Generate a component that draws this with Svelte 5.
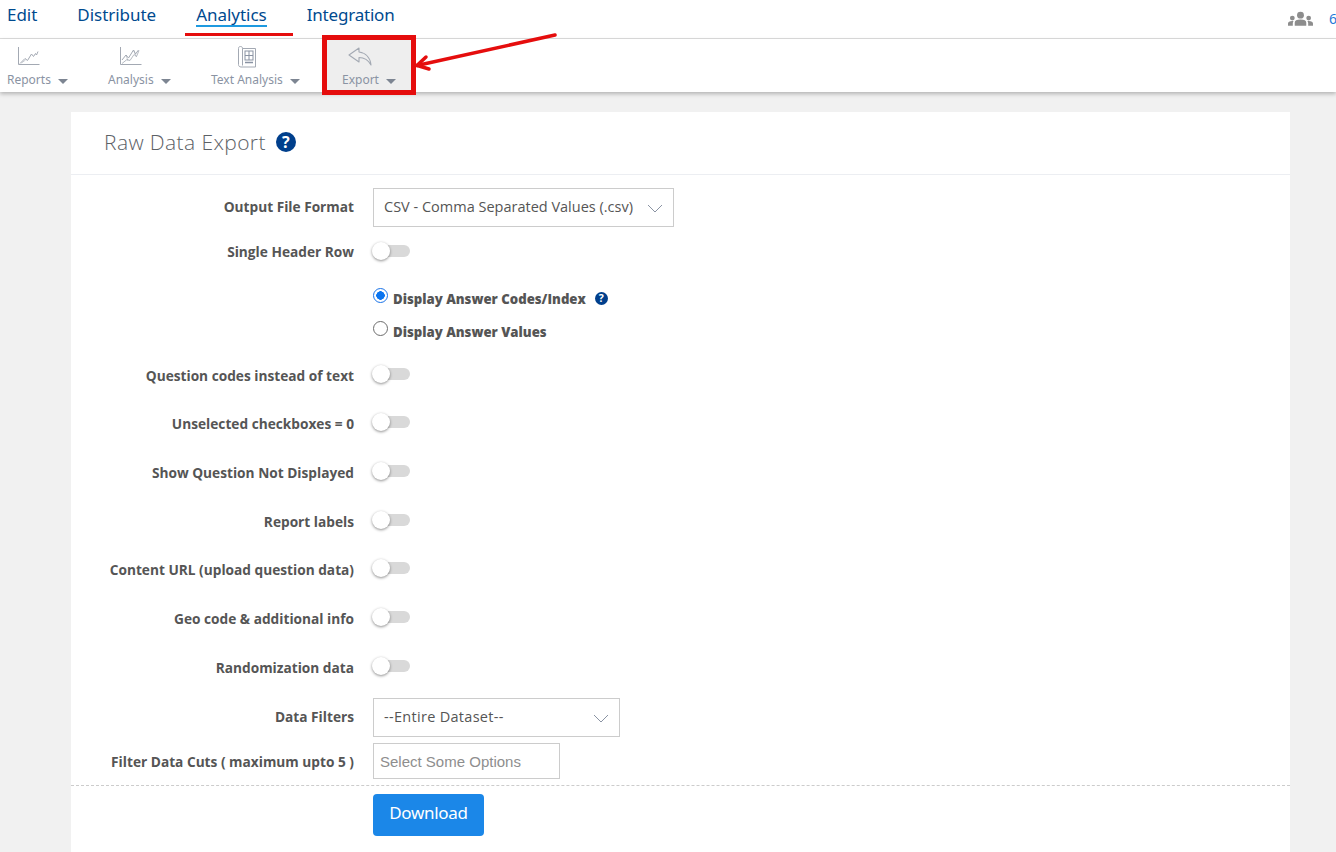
<script>
  const tabs = ['Edit', 'Distribute', 'Analytics', 'Integration'];
  const toggles = ['Question codes instead of text', 'Unselected checkboxes = 0', 'Show Question Not Displayed', 'Report labels', 'Content URL (upload question data)', 'Geo code & additional info', 'Randomization data'];
</script>

<div class="page">
  <header class="nav">
    <nav class="tabs">
      {#each tabs as t}
        <span class="tab" class:active={t === 'Analytics'}><span class="tab-text">{t}</span></span>
      {/each}
    </nav>
    <div class="users">
      <svg width="26" height="16" viewBox="0 0 26 16" fill="#8d8d8d"><circle cx="13" cy="4" r="3.600"/><circle cx="4.500" cy="7" r="2.500"/><circle cx="21.500" cy="7" r="2.500"/><path d="M7 15v-3.200C7 9.600 9 8.400 13 8.400s6 1.200 6 3.400V15zM0 15v-2.200C0 11 1.500 10 4.500 10c.7 0 1 .1 1.300.2-.5.700-.8 1.500-.8 2.300V15zM26 15v-2.200C26 11 24.500 10 21.500 10c-.7 0-1 .1-1.300.2.500.700.800 1.500.800 2.300V15z"/></svg>
      <span class="count">6</span>
    </div>
  </header>

  <div class="toolbar">
    <div class="tool reports">
      <div class="tool-inner">
        <svg width="23" height="24" viewBox="0 0 23 24" fill="none" stroke="#a3a9b3" stroke-width="1"><path d="M1.500 2v17.500H22.500"/><path d="M3 18.500l5-5 2.500 2 4-6.500 2 2.500 2-3 1 1.500 1.500-3.500"/><path d="M4.500 18l4-3" stroke-width=".6"/></svg>
        <span class="tool-label">Reports<i class="caret"></i></span>
      </div>
    </div>
    <div class="tool analysis">
      <div class="tool-inner">
        <svg width="23" height="24" viewBox="0 0 23 24" fill="none" stroke="#a3a9b3" stroke-width="1"><path d="M1.500 2v17.500H22.500"/><path d="M3 15l4-5 2.500 3 5-8 2 4 3-4"/><path d="M3 18.500l5-4 3 1 4-6 2.500 2 2.500-6" stroke-width=".8"/><path d="M7 10l2 6M14.500 5l3 7" stroke-width=".6"/></svg>
        <span class="tool-label">Analysis<i class="caret"></i></span>
      </div>
    </div>
    <div class="tool text">
      <div class="tool-inner">
        <svg width="20" height="24" viewBox="0 0 20 24" fill="none" stroke="#a3a9b3" stroke-width="1"><path d="M3.500 1.500c-1.500 0-2 .8-2 2v16c0 1.500 1 2.500 2.500 2.500h14.500V3.500H5.500"/><path d="M3.500 1.500c1.500 0 2 .8 2 2v17"/><rect x="8" y="6" width="8" height="9" stroke="#8a93a3"/><path d="M12 6v9M8 10.500h8" stroke="#8a93a3"/><path d="M8 17.500h8" stroke="#8a93a3" stroke-width="1.500"/></svg>
        <span class="tool-label">Text Analysis<i class="caret"></i></span>
      </div>
    </div>
    <div class="tool export">
      <div class="tool-inner">
        <svg width="24" height="24" viewBox="0 0 24 24" fill="none" stroke="#a3a9b3" stroke-width="1.100" stroke-linejoin="round"><path d="M11 3 1 10l10 7v-4.500c5 0 9 2 12 7.500-.5-7-5-12-12-13z"/></svg>
        <span class="tool-label">Export<i class="caret"></i></span>
      </div>
    </div>
  </div>

  <main class="card">
    <div class="card-head">
      <h1>Raw Data Export</h1>
      <span class="help">?</span>
    </div>

    <form class="form" onsubmit={(e) => e.preventDefault()}>
      <div class="row r-format">
        <span class="lbl up">Output File Format</span>
        <div class="select format">CSV - Comma Separated Values (.csv)
          <svg class="chev" width="16" height="9" viewBox="0 0 16 9" fill="none" stroke="#8a93a3"><path d="M1 1l7 7 7-7"/></svg>
        </div>
      </div>
      <div class="row r-header">
        <span class="lbl">Single Header Row</span>
        <span class="switch"></span>
      </div>
      <div class="radios">
        <div class="radio-row">
          <span class="radio on"></span>
          <b>Display Answer Codes/Index</b>
          <span class="help-sm">?</span>
        </div>
        <div class="radio-row second">
          <span class="radio"></span>
          <b>Display Answer Values</b>
        </div>
      </div>
      <div class="toggles">
        {#each toggles as t}
          <div class="row tg">
            <span class="lbl nudge">{t}</span>
            <span class="switch"></span>
          </div>
        {/each}
      </div>
      <div class="row r-filter">
        <span class="lbl up">Data Filters</span>
        <div class="select filter">--Entire Dataset--
          <svg class="chev" width="16" height="9" viewBox="0 0 16 9" fill="none" stroke="#8a93a3"><path d="M1 1l7 7 7-7"/></svg>
        </div>
      </div>
      <div class="row r-cuts">
        <span class="lbl nudge">Filter Data Cuts ( maximum upto 5 )</span>
        <div class="multi">Select Some Options</div>
      </div>
      <div class="actions">
        <button type="submit">Download</button>
      </div>
    </form>
  </main>

  <div class="red-bar"></div>
  <div class="red-box"></div>
  <svg class="arrow" width="150" height="40" viewBox="0 0 150 40" fill="none" stroke="#e50d0d" stroke-width="3.500" stroke-linecap="round"><path d="M146 2 8 32.500"/><path d="M17 24 8 32.500l12 3.500"/></svg>
</div>

<style>
  :global(body) { margin: 0; background: #f1f1f1; overflow: hidden; }
  .page { position: relative; height: 852px; overflow: hidden; background: #f1f1f1; font-family: "Noto Sans", sans-serif; color: #555; }
  .nav { display: flex; justify-content: space-between; height: 38px; background: #fff; border-bottom: 1px solid #ddd; }
  .tabs { display: flex; gap: 40px; padding-left: 7px; }
  .tab { font-size: 17px; color: #004a8f; height: 32px; line-height: 30px; letter-spacing: -0.03px; }
  .tab:last-child { letter-spacing: -0.2px; }
  .tab-text { display: inline-block; height: 26px; }
  .active .tab-text { border-bottom: 2px solid #1e9ae0; height: 25px; }
  .users { display: flex; align-items: flex-start; padding-top: 11px; gap: 16px; margin-right: -1px; width: 49px; }
  .count { color: #1e78d8; font-size: 14px; line-height: 16px; }
  .toolbar { display: flex; height: 53px; background: #fff; box-shadow: 0 2px 4px rgba(0,0,0,.25); position: relative; }
  .tool { box-sizing: border-box; height: 53px; padding-top: 6px; }
  .tool-inner { display: inline-flex; flex-direction: column; align-items: center; }
  .tool svg { display: block; }
  .tool-label { position: relative; font-size: 12px; color: #8a93a3; line-height: 16px; margin-top: 3px; white-space: nowrap; }
  .caret { position: absolute; right: -17px; top: 7px; width: 0; height: 0; border: 5px solid transparent; border-top-color: #7d8592; border-bottom: 0; }
  .reports { width: 108px; padding-left: 7px; }
  .analysis { width: 103px; }
  .text { width: 111px; }
  .export { width: 94px; padding-left: 20px; background: #eee; }
  .card { position: absolute; left: 71px; top: 112px; width: 1219px; height: 760px; background: #fff; }
  .card-head { display: flex; align-items: center; box-sizing: content-box; height: 60px; padding-bottom: 2px; border-bottom: 1px solid #eceef2; padding-left: 33px; gap: 10px; }
  h1 { margin: 0; font-size: 21px; font-weight: 300; color: #5c6166; letter-spacing: .4px; font-family: "Open Sans", sans-serif; }
  .help, .help-sm { flex: none; display: flex; align-items: center; justify-content: center; border-radius: 50%; background: #003f8c; color: #fff; font-weight: 700; }
  .help { width: 20px; height: 20px; font-size: 16px; line-height: 20px; }
  .help-sm { width: 13px; height: 13px; font-size: 10.500px; line-height: 13px; margin-left: 9px; margin-top: -1px; }
  .form { padding-top: 13px; font-size: 14px; }
  .row { display: flex; align-items: center; }
  .lbl { width: 302px; padding-right: 19px; box-sizing: border-box; text-align: right; font: 700 13.700px "Open Sans", sans-serif; color: #555; white-space: nowrap; flex: none; }
  .nudge { padding-top: 2px; }
  .up { padding-bottom: 2px; }
  .select { position: relative; box-sizing: border-box; height: 39px; border: 1px solid #ccc; padding-left: 10px; font: 14.500px/36px "Open Sans", sans-serif; color: #555; }
  .chev { position: absolute; right: 10px; top: 15px; }
  .format { width: 301px; }
  .filter { width: 247px; letter-spacing: .3px; }
  .r-header { margin-top: 5px; height: 39px; }
  .switch { position: relative; display: inline-block; width: 37px; height: 12px; margin-top: -1px; background: #d9d9d9; border-radius: 7px; }
  .switch::before { content: ""; position: absolute; left: -1px; top: -3px; width: 18px; height: 18px; border-radius: 50%; background: #fff; box-shadow: 0 1px 3px rgba(0,0,0,.45); }
  .radios { padding-left: 302px; margin-top: 16px; }
  .radio-row { display: flex; align-items: center; height: 24px; font: 700 13.200px "Open Sans", sans-serif; }
  .radio-row b { margin-left: 5px; }
  .radio-row.second { margin-top: 9px; }
  .radio { box-sizing: border-box; width: 15px; height: 15px; border-radius: 50%; border: 1px solid #6d6d6d; margin-top: -8px; background: #fff; flex: none; }
  .radio.on { border: 1px solid #1a73e8; background: radial-gradient(circle, #0b75f0 0 4px, #fff 4.500px); }
  .toggles { margin-top: 6px; }
  .tg { height: 48.667px; }
  .r-filter { margin-top: 7px; }
  .r-cuts { margin-top: 6px; }
  .multi { box-sizing: border-box; width: 187px; height: 36px; border: 1px solid #ccc; padding-left: 6px; font: 15px/35px "Liberation Sans", sans-serif; color: #8e8e8e; }
  .actions { margin-top: 6px; padding: 8px 0 0 302px; border-top: 1px dashed #ccc; }
  button { width: 111px; height: 42px; border: 0; border-radius: 4px; padding: 0 0 4px; background: #1b87e8; color: #fff; font: 17px "Noto Sans", sans-serif; letter-spacing: -0.3px; }
  .red-bar { position: absolute; left: 185px; top: 33px; width: 108px; height: 3px; background: #e50d0d; }
  .red-box { position: absolute; left: 322px; top: 35px; width: 94px; height: 60px; box-sizing: border-box; border: 5px solid #e50d0d; }
  .arrow { position: absolute; left: 409px; top: 33px; }
</style>
